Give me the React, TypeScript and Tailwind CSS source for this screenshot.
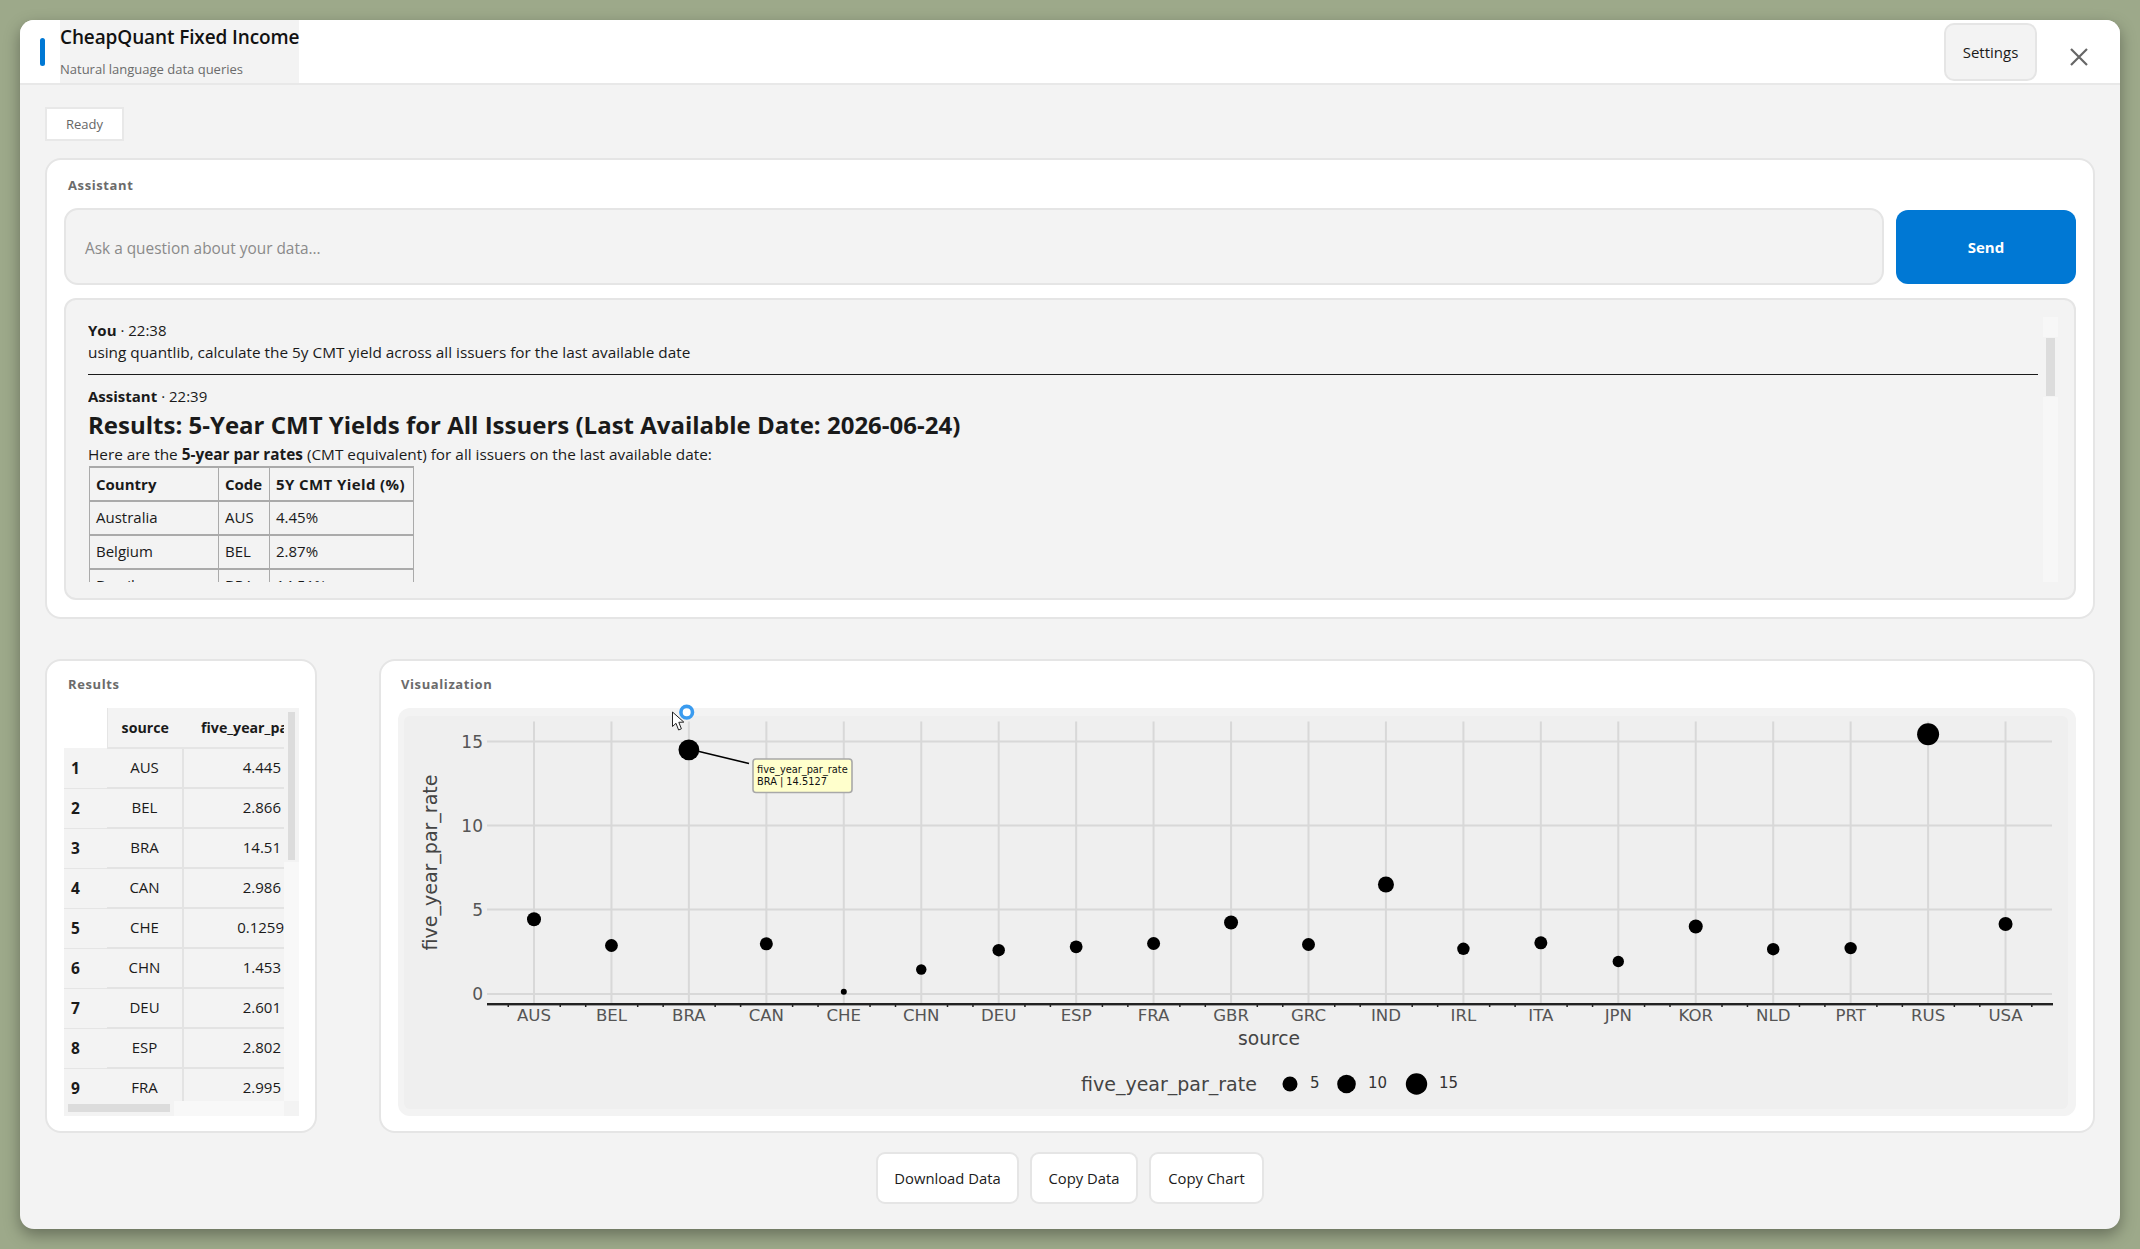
import React from 'react';

const sources = ['AUS', 'BEL', 'BRA', 'CAN', 'CHE', 'CHN', 'DEU', 'ESP', 'FRA', 'GBR', 'GRC', 'IND', 'IRL', 'ITA', 'JPN', 'KOR', 'NLD', 'PRT', 'RUS', 'USA'];

// y / radius of each dot in chart coordinates
const dots = [
    [918.7, 7], [945, 6.4], [749.3, 10.4], [943.3, 6.5], [991.3, 3], [969, 5.2], [949.7, 6.2], [946.3, 6.4], [943, 6.5], [922, 7],
    [944, 6.5], [884, 8], [948.3, 6.2], [942.3, 6.5], [961, 5.7], [926, 7], [948.7, 6.2], [947.6, 6.2], [733.7, 11], [923.5, 7],
];

const columnX = (i: number) => 534 + 77.45 * i;

const resultRows = [
    ['AUS', '4.445'], ['BEL', '2.866'], ['BRA', '14.51'], ['CAN', '2.986'], ['CHE', '0.1259'],
    ['CHN', '1.453'], ['DEU', '2.601'], ['ESP', '2.802'], ['FRA', '2.995'],
];

const yields = [['Australia', 'AUS', '4.45%'], ['Belgium', 'BEL', '2.87%'], ['Brazil', 'BRA', '14.51%']];

const Chart: React.FC = () => (
    <svg viewBox="404 716 1664 392" className="block w-full h-full overflow-visible font-['DejaVu_Sans',sans-serif]">
        {[741, 825, 909, 993.5].map(y => (
            <line key={y} x1={487} x2={2052} y1={y} y2={y} stroke="#d8d8d8" strokeWidth={2} />
        ))}
        {sources.map((s, i) => (
            <line key={s} x1={columnX(i)} x2={columnX(i)} y1={721} y2={1003} stroke="#d8d8d8" strokeWidth={2} />
        ))}
        {sources.map((s, i) => (
            <g key={s} fill="#222">
                <rect x={columnX(i) - 26.5} y={1003} width={1.5} height={3.5} />
                <rect x={columnX(i) + 25.5} y={1003} width={1.5} height={3.5} />
            </g>
        ))}
        <rect x={487} y={1002.5} width={1566} height={2.4} fill="#222" />
        {[['15', 741], ['10', 825], ['5', 909], ['0', 993.5]].map(([t, y]) => (
            <text key={t} x={483} y={y} textAnchor="end" dominantBaseline="central" fontSize={17} fill="#555">{t}</text>
        ))}
        {sources.map((s, i) => (
            <text key={s} x={columnX(i)} y={1015} textAnchor="middle" dominantBaseline="central" fontSize={16.6} fill="#555">{s}</text>
        ))}
        <text x={430} y={862} textAnchor="middle" dominantBaseline="central" fontSize={19} fill="#444" transform="rotate(-90 430 862)">five_year_par_rate</text>
        <text x={1269} y={1038} textAnchor="middle" dominantBaseline="central" fontSize={18.7} fill="#444">source</text>
        {dots.map(([y, r], i) => (
            <circle key={i} cx={columnX(i)} cy={y} r={r} fill="#000" />
        ))}

        {/* legend */}
        <text x={1081} y={1083} dominantBaseline="central" fontSize={19} fill="#444">five_year_par_rate</text>
        <circle cx={1290} cy={1083.5} r={7.5} fill="#000" />
        <text x={1310} y={1082.5} dominantBaseline="central" fontSize={15} fill="#333">5</text>
        <circle cx={1346.5} cy={1083.5} r={9.3} fill="#000" />
        <text x={1368} y={1082.5} dominantBaseline="central" fontSize={15} fill="#333">10</text>
        <circle cx={1416.5} cy={1083.5} r={10.7} fill="#000" />
        <text x={1439} y={1082.5} dominantBaseline="central" fontSize={15} fill="#333">15</text>

        {/* hover tooltip */}
        <line x1={695} y1={750} x2={749} y2={763} stroke="#000" strokeWidth={1.6} />
        <rect x={753} y={758.5} width={99} height={33.5} rx={3} fill="#ffffcc" stroke="#a8a8a8" strokeWidth={1.6} />
        <text x={757} y={768.5} dominantBaseline="central" fontSize={9.8} fill="#111">five_year_par_rate</text>
        <text x={757} y={780.5} dominantBaseline="central" fontSize={9.8} fill="#111">BRA | 14.5127</text>

        {/* pointer and click ring */}
        <circle cx={686.7} cy={711.7} r={5.8} fill="#fff" stroke="#3a9bef" strokeWidth={3.6} />
        <path d="M672.5 711.5 V726 L676 722.8 L678.6 729.5 L681.4 728.3 L678.8 721.8 L683.8 721.6 Z" fill="#fff" stroke="#222" strokeWidth={1} />
    </svg>
);

const SectionLabel: React.FC<{ children: React.ReactNode; className?: string }> = ({ children, className }) => (
    <div className={`text-[13px] leading-[18px] font-bold tracking-[0.6px] text-[#6b6b6b] ${className ?? ''}`}>{children}</div>
);

const App: React.FC = () => {
    return (
        <div className="w-[2140px] h-[1249px] p-5 bg-[#9da98a] overflow-hidden font-['Open_Sans',sans-serif] text-[#1a1a1a]">
            <div className="flex flex-col h-full bg-[#f3f3f3] rounded-[14px] overflow-hidden shadow-[0_6px_16px_rgba(0,0,0,0.35)]">
                {/* Title bar */}
                <header className="flex shrink-0 h-[65px] bg-white border-b-2 border-[#e8e8e8]">
                    <div className="w-[5px] h-[28px] mt-[18px] ml-5 mr-[15px] rounded-full bg-[#0078d4]"></div>
                    <div className="w-[239px] bg-[#f3f3f3] whitespace-nowrap">
                        <h1 className="mt-[4px] text-[19px] leading-[26px] font-semibold tracking-[-0.12px] text-[#111]">CheapQuant Fixed Income</h1>
                        <p className="mt-[9px] text-[13px] leading-[20px] text-[#6b6b6b]">Natural language data queries</p>
                    </div>
                    <button className="ml-auto mt-[3px] w-[93px] h-[58px] bg-[#f3f3f3] border-2 border-[#e5e5e5] rounded-[10px] text-[15px]">Settings</button>
                    <button className="w-[18px] h-[18px] mt-[28px] ml-[33px] mr-[32px] text-[#666]">
                        <svg viewBox="0 0 18 18" className="w-full h-full" fill="none" stroke="currentColor" strokeWidth="2.2">
                            <path d="M1 1 L17 17 M17 1 L1 17" />
                        </svg>
                    </button>
                </header>

                <main className="flex flex-col px-[25px]">
                    <div className="self-start mt-[22px] w-[79px] h-[34px] pt-[1px] flex items-center justify-center bg-white border-2 border-[#e8e8e8] text-[13px] text-[#666]">Ready</div>

                    {/* Assistant */}
                    <section className="mt-[17px] h-[461px] bg-white border-2 border-[#e5e5e5] rounded-[16px] px-[17px] pt-[16px]">
                        <SectionLabel className="ml-[4px]">Assistant</SectionLabel>
                        <div className="flex gap-3 mt-[14px]">
                            <div className="flex-1 h-[77px] flex items-center pl-[19px] pt-[5px] bg-[#f3f3f3] border-2 border-[#e5e5e5] rounded-[14px] text-[15.4px] text-[#8a8a8a]">Ask a question about your data...</div>
                            <button className="w-[180px] h-[74px] mt-[2px] pt-[1px] bg-[#0078d4] rounded-[12px] text-white text-[15px] font-bold">Send</button>
                        </div>
                        <div className="flex gap-[5px] h-[302px] mt-[13px] bg-[#f3f3f3] border-2 border-[#e5e5e5] rounded-[12px] pl-[22px] pr-[16px] pt-[17px] pb-[16px]">
                            <div className="flex-1 min-w-0 overflow-hidden pt-[2px] text-[15px] leading-[22px]">
                                <div><b>You</b> · 22:38</div>
                                <div className="text-[15.35px]">using quantlib, calculate the 5y CMT yield across all issuers for the last available date</div>
                                <hr className="mt-[11px] mb-[10px] border-t-[1.5px] border-[#1a1a1a]" />
                                <div><b>Assistant</b> · 22:39</div>
                                <h2 className="text-[24px] leading-[36px] font-bold">Results: 5-Year CMT Yields for All Issuers (Last Available Date: 2026-06-24)</h2>
                                <p className="text-[15.35px]">Here are the <b>5-year par rates</b> (CMT equivalent) for all issuers on the last available date:</p>
                                <table className="ml-[1px] mt-[1px] border-collapse text-left">
                                    <thead>
                                        <tr className="h-[34px]">
                                            <th className="w-[129px] px-[6px] border border-[#aaa] border-y-2 font-bold">Country</th>
                                            <th className="w-[51px] px-[6px] border border-[#aaa] border-y-2 font-bold">Code</th>
                                            <th className="w-[144px] px-[6px] border border-[#aaa] border-y-2 font-bold whitespace-nowrap tracking-[0.4px]">5Y CMT Yield (%)</th>
                                        </tr>
                                    </thead>
                                    <tbody>
                                        {yields.map(row => (
                                            <tr key={row[1]} className="h-[34px]">
                                                {row.map(cell => (
                                                    <td key={cell} className="px-[6px] pb-[3px] border border-[#aaa] border-y-2">{cell}</td>
                                                ))}
                                            </tr>
                                        ))}
                                    </tbody>
                                </table>
                            </div>
                            <div className="w-[15px] shrink-0 flex flex-col bg-[#f7f7f7]">
                                <div className="h-[20px]"></div>
                                <div className="h-[60px] px-[3px] py-[1px] bg-[#f3f3f3]"><div className="h-full bg-[#dcdcdc]"></div></div>
                            </div>
                        </div>
                    </section>

                    <div className="flex gap-[62px] mt-[40px] h-[474px]">
                        {/* Results */}
                        <section className="w-[272px] shrink-0 bg-white border-2 border-[#e5e5e5] rounded-[16px] px-[17px] pt-[14px]">
                            <SectionLabel className="ml-[4px]">Results</SectionLabel>
                            <div className="flex flex-col w-[235px] h-[408px] mt-[15px] text-[15px]">
                                <div className="flex flex-1 min-h-0">
                                    <div className="w-[220px] overflow-hidden">
                                        <table className="border-collapse table-fixed w-[220px]">
                                            <thead>
                                                <tr className="h-[40px] text-[14.2px]">
                                                    <th className="w-[43px] bg-white"></th>
                                                    <th className="w-[76px] bg-[#f3f3f3] border-b-2 border-l border-[#e5e5e5] font-bold">source</th>
                                                    <th className="bg-[#f3f3f3] border-b-2 border-[#e5e5e5] font-bold overflow-hidden whitespace-nowrap text-left pl-[18px]">five_year_par_rate</th>
                                                </tr>
                                            </thead>
                                            <tbody>
                                                {resultRows.map((row, i) => (
                                                    <tr key={row[0]} className="h-[40px] bg-[#f3f3f3]">
                                                        <td className="pl-[7px] pt-[2px] border-b border-[#e5e5e5] text-[15.5px] font-bold">{i + 1}</td>
                                                        <td className="pb-[2px] text-center border-b-2 border-[#e3e3e3]">{row[0]}</td>
                                                        <td className={`pb-[2px] text-right border-b-2 border-l-2 border-[#e3e3e3] ${row[1] === '0.1259' ? 'pr-0' : 'pr-[3px]'}`}>{row[1]}</td>
                                                    </tr>
                                                ))}
                                            </tbody>
                                        </table>
                                    </div>
                                    <div className="w-[15px] shrink-0 bg-[#f8f8f8]">
                                        <div className="h-[154px] px-[4px] pt-[4px] pb-[2px] bg-[#f3f3f3]"><div className="w-[7px] h-full bg-[#dcdcdc]"></div></div>
                                    </div>
                                </div>
                                <div className="flex h-[15px] shrink-0 bg-[#f8f8f8]">
                                    <div className="w-[110px] bg-[#f3f3f3] pl-[4px] py-[3px]"><div className="w-[102px] h-[8px] bg-[#dcdcdc]"></div></div>
                                    <div className="flex-1"></div>
                                    <div className="w-[15px] bg-[#f3f3f3]"></div>
                                </div>
                            </div>
                        </section>

                        {/* Visualization */}
                        <section className="flex-1 min-w-0 bg-white border-2 border-[#e5e5e5] rounded-[16px] pl-[17px] pr-[17px] pt-[14px]">
                            <SectionLabel className="ml-[3px]">Visualization</SectionLabel>
                            <div className="h-[408px] mt-[15px] bg-[#f3f3f3] rounded-[12px] pt-[8px] pl-[6px] pr-[8px] pb-[7px]">
                                <div className="h-full bg-[#efefef] rounded-md">
                                    <Chart />
                                </div>
                            </div>
                        </section>
                    </div>

                    <div className="flex justify-center gap-[11px] mt-[19px] text-[14.8px]">
                        <button className="w-[143px] h-[52px] bg-white border-2 border-[#e5e5e5] rounded-[9px]">Download Data</button>
                        <button className="w-[108px] h-[52px] bg-white border-2 border-[#e5e5e5] rounded-[9px]">Copy Data</button>
                        <button className="w-[115px] h-[52px] bg-white border-2 border-[#e5e5e5] rounded-[9px]">Copy Chart</button>
                    </div>
                </main>
            </div>
        </div>
    );
};

export default App;
